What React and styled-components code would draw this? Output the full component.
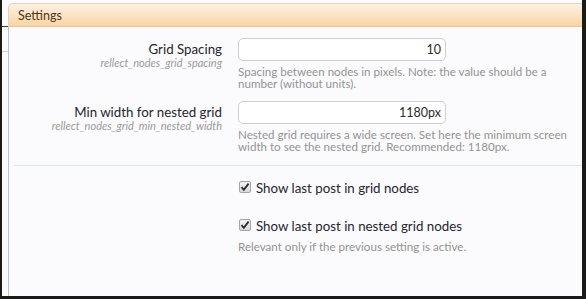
import React from "react";
import styled, { createGlobalStyle } from "styled-components";

const GlobalStyle = createGlobalStyle`
  html, body {
    margin: 0;
    padding: 0;
    background: #1a1b17;
  }
  body {
    font-family: Lato, "Open Sans", sans-serif;
  }
`;

const Frame = styled.div`
  width: 580px;
  height: 296px;
  margin-left: 2px;
  background: #fbfbfd;
  display: flex;
  flex-direction: column;
  overflow: hidden;
`;

const HeadRow = styled.div`
  display: flex;
  height: 27px;
`;

const Stub = styled.div`
  width: 6px;
  height: ${(p) => p.$h}px;
  border-bottom: 1px solid ${(p) => p.$line};
  flex: none;
`;

const Tab = styled.div`
  flex: 1;
  margin-top: 3px;
  margin-right: -6px;
  border: 1px solid #e2d3bf;
  border-bottom: 1px solid #f1c38e;
  border-radius: 5px 0 0 0;
  background: linear-gradient(to bottom, #fdf0e0 0%, #fbe0c0 60%, #f8d3a6 100%);
  display: flex;
  align-items: center;
  padding-left: 9px;
  font-size: 12.5px;
  color: #4f3415;
`;

const Body = styled.div`
  display: flex;
  flex: 1;
`;

const Panel = styled.div`
  flex: 1;
  border-left: 1px solid #b9c6c9;
  padding-top: 11px;
`;

const Grid = styled.div`
  display: grid;
  grid-template-columns: 213px 1fr;
  column-gap: 16px;
`;

const LabelCell = styled.div`
  text-align: right;
  padding-top: 3px;
`;

const Label = styled.div`
  font-size: 13.3px;
  line-height: 16px;
  color: #26252e;
`;

const Hint = styled.div`
  font-size: 11px;
  line-height: 12px;
  font-style: italic;
  color: #9a9a9a;
`;

const ValueCell = styled.div`
  padding-right: 6px;
  margin-bottom: ${(p) => p.$mb || 0}px;
`;

const TextBox = styled.input`
  box-sizing: border-box;
  width: 208px;
  height: 23px;
  border: 1px solid #cfcfcf;
  border-radius: 5px;
  background: #fff;
  text-align: right;
  padding: 0 4px;
  font-family: Lato, "Open Sans", sans-serif;
  font-size: 12.5px;
  color: #2a2a2a;
  outline: none;
`;

const Desc = styled.div`
  margin-top: ${(p) => p.$mt || 5}px;
  font-size: 11.6px;
  line-height: 12px;
  color: #939393;
  max-width: 332px;
`;

const Divider = styled.div`
  grid-column: 1 / -1;
  margin: 12px 0 14px 5px;
  height: 1px;
  background: #d8e8ea;
`;

const CheckRow = styled.label`
  display: flex;
  align-items: center;
  gap: 5px;
  font-size: 13.3px;
  line-height: 16px;
  color: #26252e;
  margin-top: ${(p) => p.$mt || 0}px;
`;

const Box = styled.span`
  box-sizing: border-box;
  width: 12px;
  height: 12px;
  margin-left: 1px;
  margin-top: -2px;
  border: 1px solid #a3a3a3;
  border-radius: 2px;
  background: linear-gradient(to bottom, #f4f4f4, #d9d9d9);
  display: flex;
  align-items: center;
  justify-content: center;
  flex: none;
`;

function Check() {
  return (
    <Box>
      <svg width="10" height="10" viewBox="0 0 10 10">
        <path d="M1.5 5.2 L3.8 7.8 L8.6 1.6" fill="none" stroke="#2e2e2e" strokeWidth="1.9" />
      </svg>
    </Box>
  );
}

const fields = [
  {
    label: "Grid Spacing",
    hint: "rellect_nodes_grid_spacing",
    value: "10",
    desc: "Spacing between nodes in pixels. Note: the value should be a number (without units).",
  },
  {
    label: "Min width for nested grid",
    hint: "rellect_nodes_grid_min_nested_width",
    value: "1180px",
    desc: "Nested grid requires a wide screen. Set here the minimum screen width to see the nested grid. Recommended: 1180px.",
  },
];

export default function App() {
  return (
    <>
      <GlobalStyle />
      <Frame>
        <HeadRow>
          <Stub $h={26} $line="#3a3d38" />
          <Tab>Settings</Tab>
        </HeadRow>
        <Body>
          <Stub $h={24} $line="#c9d4d7" />
          <Panel>
            <Grid>
              {fields.map((f, i) => (
                <React.Fragment key={f.hint}>
                  <LabelCell>
                    <Label>{f.label}</Label>
                    <Hint>{f.hint}</Hint>
                  </LabelCell>
                  <ValueCell $mb={i === 0 ? 11 : 0}>
                    <TextBox defaultValue={f.value} />
                    <Desc>{f.desc}</Desc>
                  </ValueCell>
                </React.Fragment>
              ))}
              <Divider />
              <div />
              <ValueCell>
                <CheckRow>
                  <Check />
                  Show last post in grid nodes
                </CheckRow>
                <CheckRow $mt={22}>
                  <Check />
                  Show last post in nested grid nodes
                </CheckRow>
                <Desc $mt={7}>Relevant only if the previous setting is active.</Desc>
              </ValueCell>
            </Grid>
          </Panel>
        </Body>
      </Frame>
    </>
  );
}
